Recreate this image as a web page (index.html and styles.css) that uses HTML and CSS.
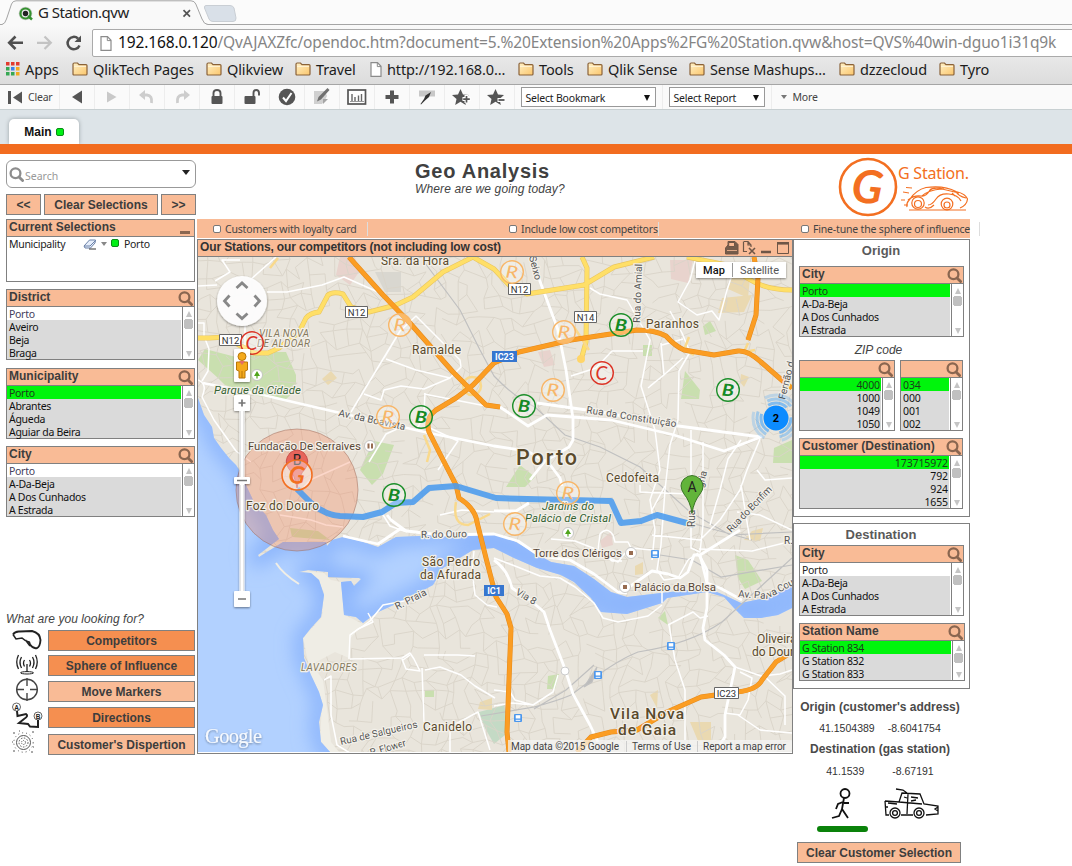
FILE: index.html
```html
<!DOCTYPE html>
<html lang="en">
<head>
<meta charset="utf-8">
<title>G Station.qvw</title>
<link rel="stylesheet" href="styles.css">
</head>
<body>
<svg class="defs" width="0" height="0" aria-hidden="true">
  <defs>
    <linearGradient id="gold" x1="0" y1="0" x2="1" y2="1"><stop offset="0" stop-color="#fff0c4"/><stop offset="1" stop-color="#fbc66c"/></linearGradient>
    <symbol id="folder" viewBox="0 0 16 14"><path d="M1 3.2V2.2Q1 1 2.200 1H5.500L7 2.600H14Q15 2.600 15 3.600V12Q15 13 14 13H2Q1 13 1 12Z" fill="url(#gold)" stroke="#8a6239" stroke-width="1.200"/><path d="M2 4.300H14" stroke="#fff6dd"/></symbol>
    <symbol id="page" viewBox="0 0 12 15"><path d="M1 .7H7.500L11 4.300V14.300H1Z" fill="#fff" stroke="#8b8b8b" stroke-width="1.200"/><path d="M7.300 1V4.600H11" fill="none" stroke="#8b8b8b"/></symbol>
    <symbol id="mag" viewBox="0 0 15 15"><circle cx="6.500" cy="6.300" r="4.900" fill="none" stroke="currentColor" stroke-width="2.300"/><path d="M10 10L13.600 13.600" stroke="currentColor" stroke-width="2.800" stroke-linecap="round"/></symbol>
  </defs>
</svg>

<div class="tabstrip">
  <svg width="240" height="25" viewBox="0 0 240 25">
    <path d="M-2 24.500H2Q5 24 6.500 19L11.500 4Q12.800 .8 16 .8H191Q194.500.8 195.800 4L202 19Q204 24.500 208 24.500V26H-2Z" fill="#f9f9f9"/>
    <path d="M-2 24.500H2Q5 24 6.500 19L11.500 4Q12.800.8 16 .8H191Q194.500.8 195.800 4L202 19Q204 24.500 208 24.500H240" fill="none" stroke="#a5a5a5"/>
    <path d="M206 5.500H230Q233 5.500 234 8L236 18Q236.300 21.500 233 21.500H213Q210 21.500 209 19L204.500 8Q204 5.500 206 5.500Z" fill="#d9e0e8" stroke="#c9ced4"/>
    <circle cx="25.500" cy="13.500" r="6.800" fill="#c6cdc4"/><circle cx="25.500" cy="13.500" r="5" fill="#ececec" stroke="#35912f" stroke-width="2.200"/><circle cx="25.500" cy="13.500" r="2.700" fill="#222"/><path d="M28 16L32 19.500" stroke="#35912f" stroke-width="2.500"/>
    <path d="M183.500 10.200L190 16.600M190 10.200L183.500 16.600" stroke="#555" stroke-width="1.700"/>
  </svg>
  <span class="tab-title">G Station.qvw</span>
</div>
<div class="navbar">
  <svg width="92" height="31" viewBox="0 25 92 31">
    <path d="M23 42.800H9.500M15.500 36.500L9.200 42.800L15.500 49" fill="none" stroke="#4f4f4f" stroke-width="2.600"/>
    <path d="M37 42.800H50.500M44.500 36.500L50.800 42.800L44.500 49" fill="none" stroke="#c3c3c3" stroke-width="2.200"/>
    <path d="M79.500 45.500A6.200 6.200 0 1 1 78 38.500" fill="none" stroke="#4f4f4f" stroke-width="2.500"/><path d="M81 35.500V42H74.500Z" fill="#4f4f4f"/>
  </svg>
  <div class="omnibox"><svg width="12" height="15"><use href="#page"/></svg><span class="url"><b>192.168.0.120</b>/QvAJAXZfc/opendoc.htm?document=5.%20Extension%20Apps%2FG%20Station.qvw&amp;host=QVS%40win-dguo1i31q9k</span></div>
</div>
<div class="bookmarks">
  <span class="bm bm1"><svg width="14" height="14"><g fill="#e23b2e"><path d="M0 0h3.500v3.500H0zM5 0h3.500v3.500H5zM10 0h3.500v3.500H10z"/></g><path fill="#37a853" d="M0 5h3.500v3.500H0z"/><path fill="#3b82ea" d="M5 5h3.500v3.500H5z"/><path fill="#f2a91c" d="M10 5h3.500v3.500H10z"/><path fill="#37a853" d="M0 10h3.500v3.500H0zM5 10h3.500v3.500H5z"/><path fill="#f2a91c" d="M10 10h3.500v3.500H10z"/></svg>Apps</span>
  <span class="bm bm2"><svg width="16" height="14"><use href="#folder"/></svg>QlikTech Pages</span>
  <span class="bm bm3"><svg width="16" height="14"><use href="#folder"/></svg>Qlikview</span>
  <span class="bm bm4"><svg width="16" height="14"><use href="#folder"/></svg>Travel</span>
  <span class="bm bm5"><svg width="12" height="15"><use href="#page"/></svg>http://192.168.0...</span>
  <span class="bm bm6"><svg width="16" height="14"><use href="#folder"/></svg>Tools</span>
  <span class="bm bm7"><svg width="16" height="14"><use href="#folder"/></svg>Qlik Sense</span>
  <span class="bm bm8"><svg width="16" height="14"><use href="#folder"/></svg>Sense Mashups...</span>
  <span class="bm bm9"><svg width="16" height="14"><use href="#folder"/></svg>dzzecloud</span>
  <span class="bm bm10"><svg width="16" height="14"><use href="#folder"/></svg>Tyro</span>
</div>

<div class="qvbar">
  <div class="qcell clear"><svg width="15" height="13"><path d="M0 0H3V13H0ZM14 .5V12.500L5 6.500Z" fill="#555"/></svg>Clear</div>
  <div class="qcell"><svg width="18" height="18"><path d="M14 2.500V15.500L4 9Z" fill="#555"/></svg></div>
  <div class="qcell"><svg width="18" height="18"><path d="M4 3.500V14.500L13.500 9Z" fill="#c9c9c9"/></svg></div>
  <div class="qcell"><svg width="18" height="18"><path d="M4 7H9Q14.500 7.500 13.500 15" fill="none" stroke="#cdcdcd" stroke-width="2.800"/><path d="M7 2V12L1 7Z" fill="#cdcdcd"/></svg></div>
  <div class="qcell"><svg width="18" height="18"><path d="M14 7H9Q3.500 7.500 4.500 15" fill="none" stroke="#cdcdcd" stroke-width="2.800"/><path d="M11 2V12L17 7Z" fill="#cdcdcd"/></svg></div>
  <div class="qcell"><svg width="18" height="18"><rect x="3.500" y="8" width="11" height="8" rx="1" fill="#555"/><path d="M5.500 9V5Q5.500 2 9 2T12.500 5V9" fill="none" stroke="#555" stroke-width="1.900"/></svg></div>
  <div class="qcell"><svg width="18" height="18"><rect x="1.500" y="8" width="11" height="8" rx="1" fill="#555"/><path d="M10.500 9V5Q10.500 2 13.200 2T16 5V7.500" fill="none" stroke="#555" stroke-width="1.900"/></svg></div>
  <div class="qcell"><svg width="18" height="18"><circle cx="9" cy="9" r="8.300" fill="#555"/><path d="M5 9.500L8 13L13.500 5" fill="none" stroke="#fff" stroke-width="2"/></svg></div>
  <div class="qcell"><svg width="18" height="18"><path d="M1 3H12L14 8L12 12L9 16H1Z" fill="#d0d0d0"/><path d="M4 13.500L5.500 9L14.500 0L16.500 2L8 11.500Z" fill="#707070"/><path d="M15 11L10 16V11Z" fill="#a5a5a5"/></svg></div>
  <div class="qcell"><svg width="20" height="18"><rect x="1" y="2" width="17.500" height="14" fill="#fff" stroke="#555" stroke-width="1.700"/><path d="M5 6V13M8 9V13M11.500 7.500V13M14.500 6V13" stroke="#666" stroke-width="1.400"/><path d="M3 13.500H17" stroke="#999"/></svg></div>
  <div class="qcell"><svg width="18" height="18"><path d="M9 2.500V15.500M2.500 9H15.500" stroke="#555" stroke-width="4"/></svg></div>
  <div class="qcell"><svg width="18" height="18"><path d="M1 2.500H17V8.500H1Z" fill="#c8c8c8"/><path d="M13 4L11 9L7 12.500L3 16.500L2.500 16L6 11L7.500 7.500Z" fill="#333"/></svg></div>
  <div class="qcell"><svg width="20" height="18"><path d="M8.500 1L11 6.500L17 7L12.500 11L13.800 17L8.500 13.800L3.200 17L4.500 11L0 7L6 6.500Z" fill="#555"/><path d="M14.500 7V15M10.500 11H18.500" stroke="#fff" stroke-width="4"/><path d="M14.500 8V14.500M11.200 11.200H17.800" stroke="#555" stroke-width="1.700"/></svg></div>
  <div class="qcell"><svg width="20" height="18"><path d="M8.500 1L11 6.500L17 7L12.500 11L13.800 17L8.500 13.800L3.200 17L4.500 11L0 7L6 6.500Z" fill="#555"/><path d="M10.500 12H18.500" stroke="#fff" stroke-width="4"/><path d="M11.500 12H17.500" stroke="#555" stroke-width="1.800"/></svg></div>
  <div class="qcell sel1"><div class="qselect">Select Bookmark<i></i></div></div>
  <div class="qcell sel2"><div class="qselect">Select Report<i></i></div></div>
  <div class="more"><i></i>More</div>
</div>
<div class="sheettabs"><div class="sheettab">Main<i class="dot"></i></div></div>

<div class="doc">
  <aside class="left">
    <div class="search"><svg width="15" height="15"><use href="#mag"/></svg><span>Search</span><i></i></div>
    <div class="selbuttons"><div class="btn">&lt;&lt;</div><div class="btn wide">Clear Selections</div><div class="btn">&gt;&gt;</div></div>
    <section class="listbox current">
      <h3>Current Selections<i class="min"></i></h3>
      <div class="selrow"><span class="field">Municipality</span><svg width="14" height="12"><path d="M1 8L6.500 2H12.500L12 5L7.500 10H2Z" fill="#e6eefb" stroke="#6c82a8"/><path d="M1 8H7L12.500 2.500" fill="none" stroke="#6c82a8"/><path d="M6 11H13" stroke="#333"/></svg><i class="tri"></i><i class="dot"></i><span>Porto</span></div>
    </section>
    <section class="listbox"><h3>District<svg width="15" height="15"><use href="#mag"/></svg></h3><div class="lb"><ul><li class="possible">Porto</li><li>Aveiro</li><li>Beja</li><li>Braga</li></ul><div class="scroll"></div></div></section>
    <section class="listbox muni"><h3>Municipality<svg width="15" height="15"><use href="#mag"/></svg></h3><div class="lb"><ul><li class="on">Porto</li><li>Abrantes</li><li>Águeda</li><li>Aguiar da Beira</li></ul><div class="scroll"></div></div></section>
    <section class="listbox"><h3>City<svg width="15" height="15"><use href="#mag"/></svg></h3><div class="lb"><ul><li class="possible">Porto</li><li>A-Da-Beja</li><li>A Dos Cunhados</li><li>A Estrada</li></ul><div class="scroll"></div></div></section>
    <p class="question">What are you looking for?</p>
    <div class="actions">
      <svg class="sketches" width="34" height="128" viewBox="10 628 34 128" fill="none" stroke="#222">
        <path d="M13 634.500Q15 631 20 631.500L32 631Q40 633 40.500 640Q40 647 37 648Q33 649 30 644.500L29 641.500" stroke-width="1.900"/><path d="M13 634.500L16 639L22 638Q25 641 29 642M25.500 640L30 646" stroke-width="1.500"/>
        <g stroke-width="1.300"><path d="M27 664V672M24.500 660Q22.500 663 24.500 666.500M29.500 660Q31.500 663 29.500 666.500M21.500 657Q18.500 662.500 21.500 668M32.500 657Q35.500 662.500 32.500 668M18.500 655Q15 662 18.500 669M35.500 655Q39 662 35.500 669"/><ellipse cx="27" cy="672.800" rx="6.500" ry="1.200" stroke-width="1"/></g>
        <g stroke="#444" stroke-width="1.400"><circle cx="27" cy="689.500" r="10.300"/><path d="M27 678V686M27 693V701M16 689.500H24M30 689.500H38"/></g>
        <g stroke="#222"><circle cx="16.500" cy="707" r="4" stroke="#666"/><circle cx="38" cy="716" r="4" stroke="#666"/><path d="M17 711L17.500 716L26 714Q29 716 24 719L19 723L28 724L30 726.500L38 727V720" stroke-width="2"/></g>
        <g stroke="#555"><circle cx="23.500" cy="742.500" r="7"/><circle cx="23.500" cy="742.500" r="9.700" stroke-dasharray="1 3"/><circle cx="23.500" cy="742.500" r="4.500" stroke-dasharray="1.500 1.500"/><circle cx="23.500" cy="742.500" r="2" stroke-dasharray="1 1"/><path d="M13 733h2M19 731h1M32 732h2M13 751h2M31 752h2M33 747h1M12 742h1"/></g>
        <g fill="#222" stroke="none" font-family="Liberation Sans" font-size="6.500" font-weight="bold" text-anchor="middle"><text x="16.500" y="709.500">A</text><text x="38" y="718.500">B</text></g>
      </svg>
      <div class="actionlist"><div class="btn hot">Competitors</div><div class="btn hot a2">Sphere of Influence</div><div class="btn a3">Move Markers</div><div class="btn hot a4">Directions</div><div class="btn a5">Customer's Dispertion</div></div>
    </div>
  </aside>

  <main>
    <div class="heading">
      <div class="titles"><h1>Geo Analysis</h1><p>Where are we going today?</p></div>
      <svg class="logo" width="136" height="62" viewBox="837 156 136 62" fill="none" stroke="#f36f21">
        <circle cx="868" cy="187" r="28" stroke-width="2.600"/>
        <text transform="translate(866 203) rotate(5)" font-family="Lato" font-size="46" font-style="italic" font-weight="700" text-anchor="middle" fill="#f36f21" stroke="none">G</text>
        <text x="898" y="178.500" font-family="Noto Sans" font-size="16" textLength="71" fill="#f36f21" stroke="none">G Station.</text>
        <g stroke-width="1.200"><path d="M907 207Q906 203 910 199Q916 190 926 187.500Q944 185 956 191.500Q966 194 967.500 199Q967 205 960 208M908 200Q914 195 921 196Q926 197 930 190Q933 187 944 189M922 196Q928 190 942 189L959 193M928 205Q932 205 936 199Q940 193 949 194Q958 195 961 201M925 207Q929 210 934 205M956 191.500Q958 196 966 198M952 193L955 196"/><circle cx="918" cy="203" r="6.200"/><circle cx="918" cy="204" r="3.500"/><circle cx="947" cy="204" r="5.800"/><circle cx="947" cy="205" r="3"/><path d="M909 210H966" stroke-width="1"/><path d="M906 187.500L912 188M903 192L909 193M901 200H905M904 205H908" stroke-width="1"/></g>
      </svg>
    </div>
    <div class="checks"><label><input type="checkbox">Customers with loyalty card</label><label class="c2"><input type="checkbox">Include low cost competitors</label><label class="c3"><input type="checkbox">Fine-tune the sphere of influence</label></div>
    <div class="work">
      <section class="mapframe">
        <h2>Our Stations, our competitors (not including low cost)
          <svg width="68" height="15" viewBox="724 240 68 15" fill="none" stroke="#6e5647"><path d="M725.500 254V248L728 245V241.500H735L738 244.500V248V254Z" fill="#755b4a"/><path d="M728.700 242.500H734.500V246.500H728.700Z" fill="#f9bb96"/><path d="M727 250.500H737" stroke="#f9bb96" stroke-width=".8"/><path d="M744 241.500H748L751 245V247M743.500 241.500V251.500H747M748 242V245H751" stroke-width="1.200"/><path d="M749 248L755 254M755 248L749 254" stroke-width="1.600"/><path d="M761 252H771" stroke-width="2.500"/><path d="M777.500 243.500H788.500V253.500H777.500Z"/><path d="M777 243.300H789" stroke-width="2.600"/></svg>
        </h2>
        <svg class="map" width="594" height="495" viewBox="198 257 594 495">
          <defs>
            <path id="sea" d="M198 398L204 415L212 427L214 438L221 448L229 458L236 465L241 473L246 485L254 502L266 515L273 530L279 539L258 555L259 557L283 542L326 542L327 546L332 540L343 537L360 541L378 547L396 537L419 536L450 533L494 534L514 541L537 554L551 562L574 566L594 579L611 592L627 597L661 593L707 588L724 595L741 603L765 598L792 586H840V608H792L778 615L761 618L744 618L734 608L724 597L707 592L667 598L662 603L627 614L601 612L591 598L574 582L561 575L537 568L514 558L494 548L473 550L443 568L433 585L409 598L376 613L363 623L356 617L344 615L341 582L351 581L354 586L361 579L359 578L328 577L328 572L308 570L299 572L311 573L319 580L324 595L321 617L311 628L303 638L304 658L311 675L319 692L323 705L319 722L321 742L331 753V800H120V380Z"/>
            <clipPath id="seaclip"><use href="#sea"/></clipPath>
            <filter id="soft"><feGaussianBlur stdDeviation="9"/></filter>
            <filter id="shadow" x="-30%" y="-30%" width="160%" height="170%"><feDropShadow dx="0" dy="1" stdDeviation="1.200" flood-opacity=".45"/></filter>
            <g id="rail"><rect x="-4" y="-4" width="8" height="8" rx="1" fill="#4b97ed"/><rect x="-2.300" y="-2.800" width="4.600" height="3.300" fill="#fff"/><path d="M-2.300 2.300H2.300" stroke="#fff"/></g>
            <g id="mb"><circle r="11.300" fill="#fff" fill-opacity=".3" stroke="#1c8f2a" stroke-width="1.400"/><text class="glyph" transform="translate(-.5 6) rotate(4) scale(1.200 1)" fill="#158a24" font-size="16.500" font-weight="bold">B</text></g>
            <g id="mr"><circle r="11.300" fill="#fff" fill-opacity=".3" stroke="#f8b668" stroke-width="1.400"/><text class="glyph" transform="translate(-.5 6) rotate(4) scale(1.250 1)" fill="#f8b668" font-size="17">R</text></g>
            <g id="mc"><circle r="11.300" fill="#fff" fill-opacity=".3" stroke="#dc3426" stroke-width="1.400"/><text class="glyph" transform="translate(-.5 6.500)" fill="#dc3426" font-size="19">C</text></g>
          </defs>
          <path d="M198 257H792V752H198Z" fill="#e9e5dc"/>
          <g fill="#c9dfaf"><path d="M205 349L236 357L254 355L265 352L286 352L296 375V390L285 400L258 396L225 385L218 378L198 360Z"/><path d="M374 441L394 445L383 474L372 485L360 470L366 457Z"/><path d="M290 528L318 531L330 540L292 537Z"/><path d="M685 371L700 390L699 399L681 399Z"/><path d="M710 321L716 331L705 335L703 326ZM643 345H652V356H643ZM735 555L748 560L762 581L745 589L738 578ZM520 465L535 477L525 487H506ZM774 448L792 440V463H773ZM548 676L559 674L555 689H547ZM658 618L665 611L668 625ZM425 690H434V697H425Z"/></g>
          <path d="M479 712L505 705V735L494 744L485 728Z" fill="#c4dac5"/>
          <g fill="#e8d3cd"><path d="M340 257H355L359 272L350 285L336 275ZM670 260H693L688 283L671 279ZM538 352L550 350L555 365L544 367ZM600 541L611 532L613 545L602 548Z"/></g>
          <g fill="#ead9b1"><path d="M322 379L331 371L337 378L328 385ZM718 313L722 298L752 295L744 312ZM732 276L742 272L750 278L748 298L728 289ZM635 566L643 562V574L635 575ZM690 722H711V742L698 741ZM480 702L492 698V710L478 709ZM752 531L763 528L760 541L744 540ZM741 374L749 377L744 387L740 382ZM650 695L658 690L657 708Z"/></g>
          <path d="M375 272H401V292H385Z" fill="#d9d7d0"/>
          <g id="streets" fill="none" stroke="#d9d4c8" stroke-width=".9"></g>
          <path d="M304 571L324 573L331 580L341 582L345 615L363 624L349 640L349 658L335 652L309 666L303 638L312 628L322 617L324 592L316 578Z" fill="#efede5"/>
          <path d="M311 663L323 680L328 716L331 742L340 753H330L320 740L322 705L309 674Z" fill="#f0eee6"/>
          <use href="#sea" fill="#b2d1ff"/>
          <g clip-path="url(#seaclip)"><use href="#sea" fill="none" stroke="#8cb5fc" stroke-width="18" filter="url(#soft)"/><path d="M276 563Q283 574 299 584" fill="none" stroke="#f0eee6" stroke-width="2"/></g>

          <g fill="none" stroke="#c0c0c0" stroke-width="1.200"><path d="M425 263L460 310L480 350L494 376Q515 398 535 407L565 435L600 447L640 467L690 512L730 535L792 532M691 523L752 540M481 716L534 707Q557 701 571 695L594 678Q620 659 638 652Q690 644 722 622L792 558M534 709L566 690L594 665M660 555L692 560L721 577L792 565"/><path d="M584 687L597 667L592 682Z" fill="#bbb"/></g>
          <g class="white thin">
            <path d="M198 286L217 285M267 292H287L322 285L344 277L378 292M240 260L222 260L230 272L215 281M276 257L250 280M245 325V345"/>
            <path d="M198 380Q208 384 202 397L214 420L236 451L251 462M197 323H204V336L209 349L208 371L202 381"/>
            <path d="M351 412L400 331L416 316L460 360L461 367L450 378L416 370L386 359M364 394L381 400L384 390L401 386L424 389L450 378M424 394L486 406M400 331L384 358M430 428L458 441L438 470M425 393L424 413L417 430"/>
            <path d="M369 462L386 434L397 429M280 515L311 520L326 525L343 527M298 494L310 480L350 462"/>
            <path d="M590 288L600 294L627 300L650 340L641 386L655 430L660 470L650 500L655 530L652 560M571 376L596 368L612 351H643M648 388L665 374L683 358M696 257L690 280L678 302L697 315L712 311L719 320L727 290L733 272M670 311L682 333L690 352L679 371L678 420L670 445L665 490L661 545L657 570M662 345L683 339M661 343L664 375L650 386M691 430V548L700 552L703 525V442M760 439L747 470L740 490L720 520L700 540L652 535M640 485V492L690 494"/>
            <path d="M741 440L728 459L720 490L710 525M757 470L765 480L792 478M665 486L652 510M699 549L752 551L792 541M737 512L760 515L792 530M741 485L750 540M657 570L664 580L678 578L688 560L698 553"/>
            <path d="M424 655H458L475 656M350 659L402 658L410 653L414 659L420 671L406 669L402 659M422 668L424 722M425 670L440 667L461 675L475 686L495 698M324 680L331 676V715L337 745L350 753M410 655L403 660M349 659L350 635L370 621L383 605L409 600M474 551L472 570L475 595L487 605L497 607M450 727L478 712L490 750M450 727V752"/>
            <path d="M368 613L373 622L358 629L350 635M494 706L512 703L533 705L553 692L558 675M494 690L510 692L515 700L533 705M668 625L693 612L700 618L708 616M669 625L675 660L685 690V740M735 667L761 676L780 674L792 670M740 672L752 678L748 700L740 715L725 713M738 715L760 730L792 733M764 676L785 696V725"/>
            <path d="M551 539L575 541L598 550L600 534Q607 526 613 535L615 542H628L631 548L652 550M598 550L612 561H622M606 556L618 562L625 553M440 515L462 510L494 512M380 510L390 526L407 532M662 592V603"/>
            <path d="M494 558L515 566L540 576L560 578L575 587L594 603L603 618L618 622L648 616L662 605"/>
          </g>
          <g class="white">
            <path d="M203 383L263 395L336 412L429 433L494 446L527 451L545 461L569 447L573 440V419L566 370L558 330L531 257M500 407L528 426L547 415L611 420L674 435L724 451L761 437L671 425L601 412L537 403M545 461L530 480M548 462L560 478L562 486"/>
            <path d="M343 536L360 540L378 544L400 529L407 531L440 535L494 534L518 541L540 556L570 560L594 574L618 592L627 593M699 555L707 570L707 608L703 628L705 640L724 655L735 667L725 715V737L715 752"/>
            <path d="M494 560Q508 570 512 588L530 600L544 612L550 630L565 669L573 694L590 725L598 742M622 592L652 571L668 574L680 578L688 572L694 555L700 555L707 583L720 588L742 600M700 555L740 530M387 515L391 520L406 531M494 511H516L529 503"/>
          </g>
          <g class="yellowcase"><path d="M198 338H209L226 337L239 345L254 353L268 353L279 348L299 332L306 318Q310 313 319 312L328 295Q333 291 343 294L351 307L369 312L396 305L413 297L443 272L473 257L494 269L510 286L527 294L584 285L614 267L654 257M582 257L587 268L586 342L581 360M687 257L727 265L747 278Q765 290 792 290"/></g>
          <g class="yellow"><path d="M198 338H209L226 337L239 345L254 353L268 353L279 348L299 332L306 318Q310 313 319 312L328 295Q333 291 343 294L351 307L369 312L396 305L413 297L443 272L473 257L494 269L510 286L527 294L584 285L614 267L654 257M582 257L587 268L586 342L581 360M687 257L727 265L747 278Q765 290 792 290"/></g>
          <g fill="none" stroke="#f9d98c" stroke-width="2.500"><circle cx="472" cy="386" r="9"/><path d="M456 502Q452 525 468 525L490 514M278 258L270 268M574 327L589 350M689 337L684 350L694 355M748 343L744 352L755 350M424 435L430 450L427 462"/></g>
          <circle cx="581" cy="359" r="4" fill="#ffd568"/><circle cx="565" cy="671" r="4" fill="#fff" stroke="#ccc"/>
          <g class="orangecase"><path d="M349 257L383 295L409 322L453 372L486 405L500 407M792 388L784 382L761 362Q748 350 738 351L714 355L684 350Q675 346 666 336Q655 330 637 330L571 340L519 352L494 363L473 385L456 398L436 410Q425 418 429 432L439 452L456 485L459 498Q475 508 477 522L486 558L496 597L507 614L511 628L507 732L509 752M754 257L758 278L756 315L748 340M577 752L591 737L611 732L637 730L667 712L701 697L737 692Q757 690 762 680L776 662L792 652"/></g>
          <g class="orange"><path d="M349 257L383 295L409 322L453 372L486 405L500 407M792 388L784 382L761 362Q748 350 738 351L714 355L684 350Q675 346 666 336Q655 330 637 330L571 340L519 352L494 363L473 385L456 398L436 410Q425 418 429 432L439 452L456 485L459 498Q475 508 477 522L486 558L496 597L507 614L511 628L507 732L509 752M754 257L758 278L756 315L748 340M577 752L591 737L611 732L637 730L667 712L701 697L737 692Q757 690 762 680L776 662L792 652"/></g>
          <circle cx="297" cy="490" r="61" fill="#f47b50" fill-opacity=".3" stroke="#9b6b5b" stroke-opacity=".5"/>
          <path d="M297 489L311 503Q325 515 340 516L363 517L382 512L396 503L413 502L429 488L456 486L496 498L527 499L611 501L621 523L641 521L657 515L694 525" fill="none" stroke="#4a9bee" stroke-opacity=".88" stroke-width="6" stroke-linejoin="round"/>

          <g class="labels">
            <text x="381" y="265" textLength="68">Sra. da Hora</text><text x="412" y="354" textLength="49">Ramalde</text><text x="646" y="328" textLength="53">Paranhos</text><text x="606" y="482" textLength="53">Cedofeita</text><text x="246" y="510" textLength="73">Foz do Douro</text><text x="422" y="566" textLength="58">São Pedro</text><text x="420" y="579" textLength="61">da Afurada</text><text x="423" y="731" textLength="49">Canidelo</text><text x="757" y="643">Oliveira</text><text x="752" y="656">do Douro</text>
            <g class="area"><text x="259" y="337" textLength="50">VILA NOVA</text><text x="257" y="347" textLength="53">DE ALDOAR</text><text x="301" y="671" textLength="56">LAVADORES</text></g>
            <g class="park"><text x="214" y="394" textLength="87">Parque da Cidade</text><text x="542" y="510" textLength="52">Jardins do</text><text x="525" y="522" textLength="86">Palácio de Cristal</text></g>
            <g class="poi"><text x="248" y="450" textLength="113">Fundação De Serralves</text><text x="533" y="557" textLength="89">Torre dos Clérigos</text><text x="634" y="591" textLength="82">Palácio da Bolsa</text></g>
            <g class="road"><text textLength="68" transform="translate(338 416) rotate(12)">Av. da Boavista</text><text textLength="91" transform="translate(586 413) rotate(9)">Rua da Constituição</text><text textLength="59" transform="translate(640 323) rotate(-88)">Rua do Amial</text><text transform="translate(529 257) rotate(75)">Seixo</text><text textLength="46" transform="translate(421 538) rotate(-1)">R. do Ouro</text><text textLength="34" transform="translate(397 610) rotate(-27)">R. Praia</text><text textLength="79" transform="translate(341 745) rotate(-13)">Rua de Salgueiros</text><text textLength="37" transform="translate(371 756) rotate(-16)">R. Flower</text><text textLength="22" transform="translate(515 594) rotate(30)">Via 8</text><text textLength="60" transform="translate(731 533) rotate(-46)">Rua do Bonfim</text><text textLength="30" transform="translate(738 597) rotate(4)">Av. Pai</text><text textLength="29" transform="translate(769 598) rotate(-28)">va Cou</text><text transform="translate(785 400) rotate(-76)">Fernão d</text><text transform="translate(784 544)">R.</text><text transform="translate(703 488) rotate(-76)">gria</text><text transform="translate(695 527) rotate(-90)">Rua</text></g>
            <text class="city" x="516" y="465" textLength="61">Porto</text><g class="town"><text x="610" y="719" textLength="74">Vila Nova</text><text x="618" y="735" textLength="58">de Gaia</text></g>
          </g>
          <g class="shields"><path d="M345.500 306.500h22v11h-22zM219.500 334.500h22v11h-22zM508.500 283.500h22v11h-22zM574.500 311.500h22v11h-22zM714.500 687.500h24v11h-24z"/><text x="356.500" y="315.500">N12</text><text x="230.500" y="343.500">N12</text><text x="519.500" y="292.500">N12</text><text x="585.500" y="320.500">N14</text><text x="726.500" y="696.500">IC23</text></g>
          <g class="blues"><path d="M492 351H517V362H492ZM484 585H504V596H484Z"/><text x="504.500" y="360">IC23</text><text x="494" y="594">IC1</text></g>
          <use href="#rail" x="655" y="554"/><use href="#rail" x="671" y="646"/><use href="#rail" x="598" y="675"/><use href="#rail" x="518" y="718"/>
          <g fill="#fff" stroke="#bbb" stroke-width=".8"><circle cx="370" cy="446" r="5.500"/><circle cx="257" cy="375" r="5.500"/><circle cx="568" cy="533" r="5.500"/><circle cx="631" cy="553" r="5.500"/><circle cx="625" cy="587" r="5.500"/></g>
          <path d="M367.500 443.500h2v5h-2zM371 443.500h2v5h-2zM629 551h4v4h-4zM623 585h4v4h-4z" fill="#976c51"/><path d="M257 371l3 5h-2.400v2.500h-1.200V376H254ZM568 529l3 5h-2.400v2.500h-1.200V534H565Z" fill="#51a51c"/>

          <use href="#mr" x="512" y="272"/><use href="#mr" x="400" y="325"/><use href="#mr" x="564" y="332"/><use href="#mr" x="388" y="417"/><use href="#mr" x="553" y="390"/><use href="#mr" x="568" y="493"/><use href="#mr" x="515" y="524"/>
          <use href="#mb" x="621" y="325"/><use href="#mb" x="421" y="417"/><use href="#mb" x="524" y="406"/><use href="#mb" x="728" y="390"/><use href="#mb" x="394" y="495"/><use href="#mc" x="252" y="343"/><use href="#mc" x="602" y="373"/>
          <path d="M297 488Q295 475 289 469Q283 461 290 453Q297 447 304 453Q311 461 305 469Q299 475 297 488Z" fill="#e7645b" stroke="#cb504a"/><text class="pin" x="297" y="465">B</text>
          <circle cx="297" cy="475" r="15" fill="#fff" fill-opacity=".4" stroke="#f36f21" stroke-width="1.600"/><text class="glyph" transform="translate(296 483.500) rotate(5)" fill="#f36f21" font-size="24" font-weight="700">G</text>
          <path d="M692 513Q690 501 684 494Q678 485 684 479Q692 472 700 479Q706 486 700 494Q694 501 692 513Z" fill="#62b43a" stroke="#397526"/><text class="pin" x="692" y="492">A</text>
          <g fill="none" stroke="#4ca6f7"><circle cx="776" cy="418" r="15" stroke-width="3" stroke-opacity=".65" stroke-dasharray="20 11"/><circle cx="776" cy="418" r="19" stroke-width="3" stroke-opacity=".45" stroke-dasharray="26 14"/><circle cx="776" cy="418" r="23" stroke-width="3" stroke-opacity=".28" stroke-dasharray="30 18"/></g><circle cx="776" cy="418" r="12.500" fill="#0c8bff"/><text class="cluster" x="776" y="421.500">2</text>

          <g filter="url(#shadow)"><circle cx="242" cy="301" r="25" fill="#fff" fill-opacity=".94"/></g><path d="M236.500 288L242 283L247.500 288M236.500 313.500L242 318.500L247.500 313.500M229.500 295.500L224.500 301L229.500 306.500M254.500 295.500L259.500 301L254.500 306.500" fill="none" stroke="#888" stroke-width="2.800"/>
          <g filter="url(#shadow)" fill="#fff"><rect x="234" y="349" width="16" height="33" rx="1"/><rect x="239.500" y="410" width="5" height="182"/><rect x="234" y="395" width="16" height="16" rx="1"/><rect x="234" y="477" width="16" height="7" rx="1"/><rect x="234" y="591" width="16" height="16" rx="1"/></g>
          <path d="M240.500 411V477M243.500 411V477M240.500 485V591M243.500 485V591" stroke="#d5d5d5" stroke-width=".6"/><path d="M238.500 403H245.500M242 399.500V406.500M238 599H246M237 480.500H247" stroke="#777" stroke-width="1.700"/>
          <circle cx="242" cy="356.500" r="4" fill="#f4aa1c" stroke="#b87608"/><path d="M236.500 362H247.500V370L245 371V378H239V371L236.500 370Z" fill="#f4aa1c" stroke="#b87608"/><path d="M239 361H245L242 365Z" fill="#e36d66"/><path d="M242 371V378" stroke="#b87608"/>

          <g filter="url(#shadow)"><path d="M696 262H786V278H696Z" fill="#fff"/></g><path d="M732.500 263V277" stroke="#999"/><text x="703" y="274" class="ctl strong" textLength="22">Map</text><text x="740" y="274" class="ctl" textLength="39">Satellite</text>
          <g filter="url(#shadow)"><text x="205" y="743" class="google" textLength="57">Google</text></g>
          <path d="M508 740H792V752H508Z" fill="#f5f5f5" fill-opacity=".72"/><path d="M626.500 741V752M697.500 741V752" stroke="#ccc"/><g class="credits"><text x="511" y="750" textLength="108">Map data ©2015 Google</text><text x="632" y="750" textLength="59">Terms of Use</text><text x="703" y="750" textLength="83">Report a map error</text></g>
        </svg>
      </section>

      <aside class="right">
        <section class="panel">
          <h4>Origin</h4>
          <section class="listbox"><h3>City<svg width="15" height="15"><use href="#mag"/></svg></h3><div class="lb"><ul><li class="on">Porto</li><li>A-Da-Beja</li><li>A Dos Cunhados</li><li>A Estrada</li></ul><div class="scroll"></div></div></section>
          <p class="zip">ZIP code</p>
          <div class="pair"><section class="listbox z1 num"><h3><svg width="15" height="15"><use href="#mag"/></svg></h3><div class="lb"><ul><li class="on">4000</li><li>1000</li><li>1049</li><li>1050</li></ul><div class="scroll"></div></div></section><section class="listbox z2"><h3><svg width="15" height="15"><use href="#mag"/></svg></h3><div class="lb"><ul><li class="on">034</li><li>000</li><li>001</li><li>002</li></ul><div class="scroll"></div></div></section></div>
          <section class="listbox cust num"><h3>Customer (Destination)<svg width="15" height="15"><use href="#mag"/></svg></h3><div class="lb"><ul><li class="on">173715972</li><li>792</li><li>924</li><li>1655</li></ul><div class="scroll"></div></div></section>
        </section>
        <section class="panel dest">
          <h4>Destination</h4>
          <section class="listbox"><h3>City<svg width="15" height="15"><use href="#mag"/></svg></h3><div class="lb"><ul><li class="possible dark">Porto</li><li>A-Da-Beja</li><li>A Dos Cunhados</li><li>A Estrada</li></ul><div class="scroll"></div></div></section>
          <section class="listbox station"><h3>Station Name<svg width="15" height="15"><use href="#mag"/></svg></h3><div class="lb"><ul><li class="on">G Station 834</li><li>G Station 832</li><li>G Station 833</li></ul><div class="scroll"></div></div></section>
        </section>
        <div class="coords"><h5>Origin (customer's address)</h5><div class="nums"><span>41.1504389</span><span>-8.6041754</span></div><h5>Destination (gas station)</h5><div class="nums n2"><span>41.1539</span><span>-8.67191</span></div></div>
        <div class="modes">
          <svg width="150" height="48" viewBox="797 786 150 48" fill="none" stroke="#111">
            <circle cx="845" cy="793.500" r="4.500" stroke-width="1.800"/><path d="M844 798L842 809L848 818M842 809L839 816L832 818M843 802L838 804L836 809M844 803L849 803" stroke-width="1.800"/>
            <path d="M820 829H865" stroke="#0a820a" stroke-width="6" stroke-linecap="round"/>
            <g stroke-width="1.300"><path d="M885 801L899 802L902 793L920 794L924 804L938 806L938 814L926 815M885 801L886 815L889 815M901 815H913M899 802L922 804M908 794L907 814M896 789L903 790L907 793M904 797L907 798M911 797L918 798M911 801L916 800M888 807H885M938 807L935 809L938 811M888 803L897 804"/><circle cx="895" cy="813" r="5"/><circle cx="895" cy="813" r="2.400"/><circle cx="919" cy="813" r="5"/><circle cx="919" cy="813" r="2.400"/></g>
          </svg>
        </div>
        <div class="btn clearcust">Clear Customer Selection</div>
      </aside>
    </div>
  </main>
</div>
<script src="map.js"></script>
</body>
</html>
```
FILE: map.js
```js
// Minor street network: a jittered lattice with some links left out.
(function () {
  var seed = 41;
  function rnd() { seed = (seed * 16807) % 2147483647; return seed / 2147483647; }
  var pts = [], step = 12, cols = 52, rows = 44, d = '';
  for (var r = 0; r < rows; r++) {
    pts.push([]);
    for (var c = 0; c < cols; c++) {
      pts[r].push([190 + c * step + r * 1.5 % 9 + (rnd() - 0.5) * 11, 250 + r * step + (rnd() - 0.5) * 11]);
    }
  }
  function link(a, b) { d += 'M' + a[0].toFixed(1) + ' ' + a[1].toFixed(1) + 'L' + b[0].toFixed(1) + ' ' + b[1].toFixed(1); }
  for (r = 0; r < rows - 1; r++) {
    for (c = 0; c < cols - 1; c++) {
      if (rnd() < 0.72) link(pts[r][c], pts[r][c + 1]);
      if (rnd() < 0.72) link(pts[r][c], pts[r + 1][c]);
    }
  }
  var path = document.createElementNS('http://www.w3.org/2000/svg', 'path');
  path.setAttribute('d', d);
  document.getElementById('streets').appendChild(path);
})();
```
FILE: styles.css
```css
* { box-sizing: border-box; }
body { margin: 0; width: 1072px; height: 866px; overflow: hidden; background: #fff; font-family: "Liberation Sans", sans-serif; color: #333; }
h1, h2, h3, h4, h5, p, ul { margin: 0; padding: 0; }
ul { list-style: none; }
svg { display: block; flex: none; }
.defs { position: absolute; }

.tabstrip { height: 25px; display: flex; background: linear-gradient(#fbfbfb 24px, #a5a5a5 24px); }
.tab-title { margin-left: -202px; font: 15px/25px "Noto Sans", sans-serif; letter-spacing: -.5px; color: #222; }
.navbar { height: 32px; display: flex; background: linear-gradient(#f9f9f9, #e9e9e9); }
.omnibox { flex: 1; height: 28px; margin: 4px -3px 0 0; border: 1px solid #aaa; border-radius: 2px; background: #fff; display: flex; align-items: center; padding-left: 7px; }
.url { margin-left: 6px; font: 15.5px/24px "Noto Sans", sans-serif; letter-spacing: -.13px; color: #858585; white-space: nowrap; margin-top: -2px; }
.url b { font-weight: 400; color: #111; }
.bookmarks { height: 28px; display: grid; grid-template-columns: 66px 134px 89px 75px 148px 69px 102px 150px 100px 80px; padding: 0 0 3px 6px; background: linear-gradient(#e8e8e8, #dcdcdc); border-bottom: 1px solid #a5a5a5; }
.bm { display: flex; align-items: center; gap: 5px; font: 14.5px/24px "Noto Sans", sans-serif; letter-spacing: -.12px; color: #1c1c1c; white-space: nowrap; }

.qvbar { height: 25px; display: flex; background: #fafafa; border-bottom: 1px solid #c8d0d2; font: 10.5px "Noto Sans", sans-serif; color: #444; }
.qcell { width: 35px; border-right: 1px solid #ededed; display: flex; align-items: center; justify-content: center; }
.qcell.clear { width: 59.5px; justify-content: flex-start; gap: 5px; padding-left: 8px; letter-spacing: -.2px; }
.qcell.sel1 { width: 148px; }
.qcell.sel2 { width: 109px; }
.qselect { width: 135px; height: 20px; border: 1px solid #999; background: #fff; color: #222; padding: 1px 5px 0 4px; display: flex; align-items: center; justify-content: space-between; letter-spacing: -.2px; }
.sel2 .qselect { width: 96px; }
.qselect i, .more i { border: 3.500px solid transparent; border-top: 6px solid #111; border-bottom: 0; }
.more { display: flex; align-items: center; gap: 6px; padding-left: 9px; letter-spacing: -.2px; }
.more i { border-top: 4.500px solid #777; }
.sheettabs { height: 44px; background: #dde4e8; border-bottom: 10px solid #f26c1f; padding: 9px 0 0 9px; }
.sheettab { width: 70px; height: 25px; background: #fff; border-radius: 5px 5px 0 0; box-shadow: 0 0 4px #9aa2a6; clip-path: inset(-5px -5px 0); display: flex; align-items: center; justify-content: center; gap: 4px; font: bold 12px "Liberation Sans", sans-serif; color: #111; }
.dot { width: 8px; height: 8px; border-radius: 2px; background: #00f015; border: 1px solid #0a8d17; }

.doc { display: flex; }
.left { width: 190px; margin: 6px 1px 0 6px; }
.search { height: 28px; border: 1px solid #999; border-radius: 6px; display: flex; align-items: center; padding: 0 5px 0 2px; font: 10.5px "Noto Sans", sans-serif; color: #999; }
.search svg { color: #8d8d8d; margin-right: 1px; }
.search span { margin-top: 3px; }
.search i { margin: -3px 0 0 auto; border: 4px solid transparent; border-top: 5px solid #222; border-bottom: 0; }
.selbuttons { display: grid; grid-template-columns: 35px 114px 35px; gap: 3px; margin-top: 6px; }
.btn { height: 21px; border: 1px solid #808080; background: #f9bb96; font: bold 12px/20px "Liberation Sans", sans-serif; color: #3d3d3d; text-align: center; white-space: nowrap; }
.btn.hot { background: #f58f50; }

.listbox { width: 189px; border: 1px solid #808080; margin-top: 7px; background: #fff; font: 10.5px/14px "Noto Sans", sans-serif; letter-spacing: -.3px; color: #222; }
.listbox h3 { height: 17px; background: #f9bb96; border-bottom: 1px solid #808080; padding-left: 2px; display: flex; font: bold 12px/14px "Liberation Sans", sans-serif; letter-spacing: 0; color: #3d3d3d; white-space: nowrap; }
.listbox h3 svg { margin: 1px 1px 0 auto; color: #8a6650; }
.current { height: 63px; margin-top: 4px; }
.min { width: 10px; height: 3px; background: #8a6650; margin: 11px 4px 0 auto; }
.selrow { display: flex; align-items: center; padding-left: 2px; height: 14px; }
.field { width: 74px; }
.tri { border: 3px solid transparent; border-top: 4px solid #888; border-bottom: 0; margin: 0 4px 0 4px; }
.selrow .dot { margin: -3px 5px 0 0; }
.muni { margin-top: 8px; }
.lb { display: flex; }
.lb ul { flex: 1; }
.lb li { height: 13px; padding-left: 2px; background: #dadada; margin-right: 1px; color: #111; }
.num .lb li, .z2 .lb li { letter-spacing: -.1px; }
.num .lb li { text-align: right; padding-right: 1px; }
.lb li.possible { background: #fff; color: #44405c; }
.lb li.dark { color: #222; }
.lb li.on { background: #00f50c; color: #1b3c1b; }
.scroll { width: 12px; border-left: 1px solid #808080; display: flex; flex-direction: column; align-items: center; background: radial-gradient(circle, #c0c0c0 5.500px, transparent 6px) no-repeat 1px 12px / 9px 10px; }
.scroll::before { content: ""; border: 3.500px solid transparent; border-bottom: 6px solid #c4c4c4; border-top: 0; margin-top: 4px; }
.scroll::after { content: ""; border: 3.500px solid transparent; border-top: 6px solid #c4c4c4; border-bottom: 0; margin: auto 0 2px; }
.question { font: italic 12px/14px "Liberation Sans", sans-serif; letter-spacing: .05px; margin: 95px 0 2px; color: #444; }
.actions { display: flex; }
.sketches { margin: 0 4px 0 4px; }
.actionlist { width: 147px; padding-top: 2px; }
.a2 { margin-top: 4px; }
.a3, .a4 { margin-top: 5px; }
.a5 { margin-top: 6px; }

main { width: 875px; }
.heading { height: 65px; display: flex; padding-top: 2px; }
.titles { width: 422px; margin-left: 218px; }
h1 { font: bold 20px/24px "Liberation Sans", sans-serif; margin-top: 3px; letter-spacing: .75px; color: #404040; }
.titles p { font: italic 12px/14px "Liberation Sans", sans-serif; color: #444; margin-top: -1px; letter-spacing: .12px; }
.checks { height: 19px; width: 773px; background: #f9bb96; display: flex; align-items: center; font: 10.5px "Noto Sans", sans-serif; letter-spacing: -.18px; color: #444; white-space: nowrap; }
.checks label { display: flex; flex: none; align-items: center; padding-left: 16px; width: 171px; border-right: 1px solid #ddd; height: 14px; }
.checks .c2 { margin-left: 125px; width: 166px; }
.checks .c3 { margin-left: 126px; width: 195px; }
.checks input { appearance: none; flex: none; width: 8px; height: 8px; margin: 0 4px 0 0; border: 1px solid #777; border-radius: 2px; background: #fff; }
.work { display: flex; padding-top: 1px; }
.mapframe { width: 596px; height: 515px; border: 1px solid #808080; }
.mapframe h2 { height: 17px; background: #f9bb96; border-bottom: 1px solid #808080; padding-left: 2px; display: flex; justify-content: space-between; font: bold 12px/15px "Liberation Sans", sans-serif; letter-spacing: -.13px; color: #333; }
.white path { fill: none; stroke: #fff; stroke-width: 2.800; stroke-linejoin: round; }
.white.thin path { stroke-width: 1.500; }
.yellowcase path, .yellow path, .orangecase path, .orange path { fill: none; stroke-linejoin: round; }
.yellowcase path { stroke: #e9c560; stroke-width: 5; }
.yellow path { stroke: #ffdf67; stroke-width: 3.800; }
.orangecase path { stroke: #e58a1c; stroke-width: 5; }
.orange path { stroke: #fb9d23; stroke-width: 4; }
.map text { font-family: Roboto, sans-serif; }
.labels text { font-size: 12px; fill: #5a4a2c; stroke: #f3f0e9; stroke-width: 2.500px; paint-order: stroke; stroke-linejoin: round; }
.labels .area text { font-size: 10px; font-style: italic; fill: #857a5e; }
.labels .park text { font-size: 11.500px; font-style: italic; fill: #356233; }
.labels .poi text { font-size: 11.500px; fill: #594738; }
.labels .road text { font-size: 10px; fill: #555; }
.labels text.city { font-size: 21.500px; font-weight: 500; }
.labels .town text { font-size: 15.500px; font-weight: 500; }
.shields path { fill: #fff; stroke: #666; }
.shields text, .blues text { font-size: 9.500px; fill: #333; text-anchor: middle; }
.blues path { fill: #3676cf; }
.blues text { fill: #fff; font-weight: bold; font-size: 9px; }
.map text.glyph { font-family: Lato, sans-serif; font-style: italic; text-anchor: middle; }
.pin { font-size: 14px; text-anchor: middle; fill: #222; }
.cluster { font-size: 11px; font-weight: bold; text-anchor: middle; }
.ctl { font-size: 11px; fill: #555; }
.ctl.strong { font-weight: 500; fill: #111; }
.map text.google { font-family: "Liberation Serif", serif; font-size: 20.500px; fill: #fff; fill-opacity: .9; }
.credits text { font-size: 10px; fill: #444; }

.right { width: 187px; }
.panel { width: 177px; height: 278px; border: 1px solid #808080; padding-left: 5px; }
.panel h4 { font: bold 13px/15px "Liberation Sans", sans-serif; color: #5a5a5a; text-align: center; padding: 3px 6px 0 0; height: 19px; }
.panel .listbox { width: 165px; }
.zip { font: italic 12px/14px "Liberation Sans", sans-serif; text-align: center; margin: 6px 11px 3px 0; color: #444; }
.pair { display: flex; gap: 5px; }
.panel .pair .listbox { margin-top: 0; }
.panel .pair .z1 { width: 96px; }
.panel .pair .z2 { width: 63px; }
.panel .cust { width: 164px; }
.dest { height: 166px; margin-top: 6px; }
.dest h4 { height: 14px; }
.panel .station { width: 166px; }
.coords { width: 174px; text-align: center; padding-top: 11px; }
h5 { font: bold 12px/14px "Liberation Sans", sans-serif; color: #4a4a4a; }
.nums { display: flex; justify-content: center; gap: 13px; font-size: 10.500px; line-height: 12px; margin: 8px 0 8px; }
.n2 { gap: 28px; margin: 9px 0 0; }
.modes { padding: 9px 0 0 4px; }
.clearcust { width: 164px; margin: 8px 0 0 4px; }
```
